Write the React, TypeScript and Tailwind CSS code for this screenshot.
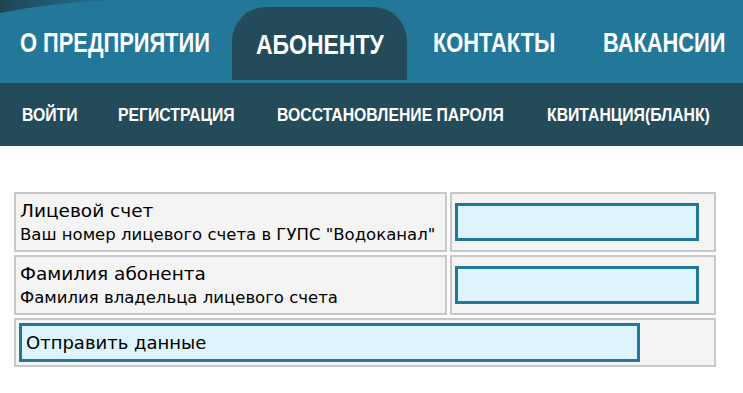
const navFont = { fontFamily: "'Liberation Sans', Arial, sans-serif" };
const formFont = { fontFamily: "'DejaVu Sans', Verdana, sans-serif" };

const mainNav = [
  { label: 'О ПРЕДПРИЯТИИ', box: 'w-[232px] pl-5' },
  { label: 'АБОНЕНТУ', box: 'w-[175px]', active: true },
  { label: 'КОНТАКТЫ', box: 'w-[171px] pl-[26px]' },
  { label: 'ВАКАНСИИ', box: 'w-[165px] pl-[25px]' },
];

const subNav = [
  { label: 'ВОЙТИ', box: 'w-[98px] pl-[22px]' },
  { label: 'РЕГИСТРАЦИЯ', box: 'w-[159px] pl-5' },
  { label: 'ВОССТАНОВЛЕНИЕ ПАРОЛЯ', box: 'w-[270px] pl-5' },
  { label: 'КВИТАНЦИЯ(БЛАНК)', box: 'w-[216px] pl-5' },
];

const fields = [
  { title: 'Лицевой счет', hint: 'Ваш номер лицевого счета в ГУПС "Водоканал"' },
  { title: 'Фамилия абонента', hint: 'Фамилия владельца лицевого счета' },
];

export default function App() {
  return (
    <div className="w-[743px] h-[393px] bg-white overflow-hidden">
      {/* top menu */}
      <div className="relative h-[83px] bg-[#23789a]">
        <svg className="absolute left-0 top-0" width="130" height="16" viewBox="0 0 130 16">
          <defs>
            <linearGradient id="arc" x1="0" x2="1" y1="0" y2="0">
              <stop offset="0" stopColor="#1f4555" />
              <stop offset="1" stopColor="#23789a" />
            </linearGradient>
          </defs>
          <path d="M0 0 H125 Q60 1 0 13 Z" fill="url(#arc)" />
        </svg>
        <div className="relative flex items-end h-[80px] font-bold text-white text-[28px] whitespace-nowrap" style={navFont}>
          {mainNav.map((item) =>
            item.active ? (
              <div
                key={item.label}
                className={`${item.box} shrink-0 min-w-0 h-[73px] flex items-center justify-center pt-[3px] rounded-t-[34px] bg-[#244b5a]`}
              >
                <span className="inline-block scale-x-[0.82]">{item.label}</span>
              </div>
            ) : (
              <div key={item.label} className={`${item.box} shrink-0 min-w-0 h-[73px] flex items-center pb-[1px]`}>
                <span className="inline-block origin-left scale-x-[0.78]">{item.label}</span>
              </div>
            )
          )}
        </div>
      </div>

      {/* sub menu */}
      <div
        className="h-[63px] bg-[#244b5a] flex items-center text-white font-bold text-[19px] whitespace-nowrap"
        style={navFont}
      >
        {subNav.map((item) => (
          <div key={item.label} className={`${item.box} shrink-0 min-w-0 pt-[1px]`}>
            <span className="inline-block origin-left scale-x-[0.83]">{item.label}</span>
          </div>
        ))}
      </div>

      {/* form */}
      <div className="mt-[46px] ml-[14px] w-[702px] flex flex-col gap-[3px] text-black" style={formFont}>
        {fields.map((f) => (
          <div key={f.title} className="flex gap-[3px] h-[60px]">
            <div className="w-[433px] border-2 border-[#c8c8c8] bg-[#f4f4f4] pl-1 flex flex-col justify-center">
              <div className="text-[18.5px] leading-[25px]">{f.title}</div>
              <div className="text-[16.5px] leading-[24px]">{f.hint}</div>
            </div>
            <div className="flex-1 border-2 border-[#c8c8c8] bg-[#f4f4f4] pl-[3px] flex items-center">
              <input className="w-[244px] h-[38px] border-[3px] border-[#22789a] bg-[#ddf4fc] outline-none" />
            </div>
          </div>
        ))}
        <div className="h-[49px] border-2 border-[#c8c8c8] bg-[#f4f4f4] pl-[3px] flex items-center">
          <button className="w-[621px] h-[39px] border-[3px] border-[#22789a] bg-[#ddf4fc] text-left pl-[4px] text-[18px]">
            Отправить данные
          </button>
        </div>
      </div>
    </div>
  );
}
